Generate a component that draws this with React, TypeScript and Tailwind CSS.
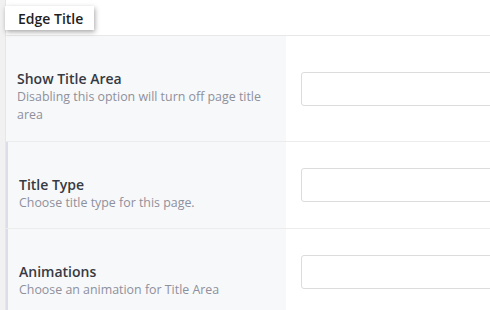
import React from "react";

const rows = [
  { label: "Show Title Area", desc: "Disabling this option will turn off page title area", first: true },
  { label: "Title Type", desc: "Choose title type for this page.", first: false },
  { label: "Animations", desc: "Choose an animation for Title Area", first: false },
];

export default function App() {
  return (
    <div
      className="w-[490px] h-[310px] overflow-hidden bg-white flex"
      style={{ fontFamily: '"Open Sans", "Noto Sans", sans-serif' }}
    >
      <div className="w-[5px] shrink-0 bg-[#f1f1f1] border-r border-[#e6e6e6] box-content" />
      <div className="flex-1 flex flex-col min-w-0">
        <div className="h-[36px] shrink-0 border-b border-[#e8e8e8] relative">
          <div className="absolute left-[-1px] top-[6px] h-[24px] w-[89px] bg-white pl-[13px] flex items-center text-[14px] font-semibold text-[#1f1f1f] shadow-[1px_2px_5px_rgba(0,0,0,0.35)]">
            Edge Title
          </div>
        </div>
        {rows.map((r, i) => (
          <div key={i} className="flex shrink-0 border-b border-[#ececec]">
            <div
              className={
                r.first
                  ? "w-[280px] shrink-0 bg-[#f7f8fa] pl-[11px] pr-[20px] pt-[34px] pb-[17px]"
                  : "w-[280px] shrink-0 bg-[#f7f8fa] border-l-2 border-[#dcdde8] pl-[11px] pr-[20px] pt-[34px] pb-[16px]"
              }
            >
              <div className="text-[14px] leading-[18px] font-semibold text-[#353a43]">{r.label}</div>
              <div className="text-[12.4px] leading-[18px] text-[#8e909c]">{r.desc}</div>
            </div>
            <div className="flex-1 flex items-center pl-[15px] min-w-0">
              <div className="h-[34px] w-[220px] shrink-0 rounded-[3px] border border-[#dcdcdc] bg-white" />
            </div>
          </div>
        ))}
      </div>
    </div>
  );
}
